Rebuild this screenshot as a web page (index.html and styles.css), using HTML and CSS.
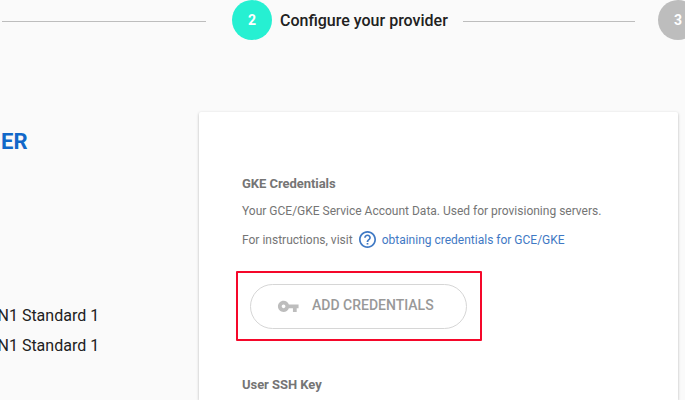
FILE: index.html
```html
<!DOCTYPE html>
<html lang="en">
<head>
<meta charset="utf-8">
<title>Configure your provider</title>
<link rel="stylesheet" href="styles.css">
</head>
<body>
<header class="stepper">
  <span class="line line-before"></span>
  <span class="step step-active">2</span>
  <span class="step-label">Configure your provider</span>
  <span class="line line-after"></span>
  <span class="step">3</span>
</header>
<main class="content">
  <aside class="summary">
    <h1>ER</h1>
    <p>N1 Standard 1</p>
    <p>N1 Standard 1</p>
  </aside>
  <section class="card">
    <h2>GKE Credentials</h2>
    <p class="description">Your GCE/GKE Service Account Data. Used for provisioning servers.</p>
    <p class="help">
      <span class="help-text">For instructions, visit</span>
      <a class="help-link">
        <svg class="help-icon" viewBox="2 2 20 20"><path fill="currentColor" d="M11 18h2v-2h-2v2zm1-16C6.480 2 2 6.480 2 12s4.480 10 10 10 10-4.480 10-10S17.520 2 12 2zm0 18c-4.410 0-8-3.590-8-8s3.590-8 8-8 8 3.590 8 8-3.590 8-8 8zm0-14c-2.210 0-4 1.790-4 4h2c0-1.100.9-2 2-2s2 .9 2 2c0 2-3 1.750-3 5h2c0-2.250 3-2.500 3-5 0-2.210-1.790-4-4-4z"/></svg>
        <span class="link-text">obtaining credentials for GCE/GKE</span>
      </a>
    </p>
    <div class="highlight">
      <button class="add-button">
        <svg class="key-icon" viewBox="0 0 24 24"><path fill="currentColor" d="M12.650 10C11.830 7.670 9.610 6 7 6c-3.310 0-6 2.690-6 6s2.690 6 6 6c2.610 0 4.830-1.670 5.650-4H17v4h4v-4h2v-4H12.650zM7 14c-1.100 0-2-.9-2-2s.9-2 2-2 2 .9 2 2-.9 2-2 2z"/></svg>
        <span class="button-text">ADD CREDENTIALS</span>
      </button>
    </div>
    <h2>User SSH Key</h2>
  </section>
</main>
</body>
</html>
```
FILE: styles.css
```css
* { box-sizing: border-box; }

body {
  margin: 0;
  width: 685px;
  height: 400px;
  overflow: hidden;
  background: #fafafa;
  color: #212121;
  font-family: Roboto, "Liberation Sans", sans-serif;
}

h1, h2, p { margin: 0; white-space: nowrap; }

.stepper {
  display: flex;
  align-items: center;
  height: 40px;
  padding-left: 2px;
}

.line { flex: none; height: 1px; margin-top: 3px; background: #bdbdbd; }
.line-before { width: 204px; margin-right: 26px; }
.line-after { width: 172px; margin-right: 23px; }

.step {
  flex: none;
  width: 40px;
  height: 40px;
  border-radius: 50%;
  background: #bdbdbd;
  color: #fff;
  font-size: 14px;
  font-weight: 700;
  line-height: 40px;
  text-align: center;
}

.step-active { background: #26f0d2; }

.step-label {
  flex: none;
  width: 191px;
  padding: 2px 0 0 8px;
  font-size: 16px;
  font-weight: 500;
  line-height: 40px;
  white-space: nowrap;
}

.content { display: flex; height: 360px; }

.summary { flex: none; width: 199px; padding-top: 87px; }

.summary h1 {
  margin: 0 0 144px 1px;
  color: #1168c9;
  font-size: 22px;
  font-weight: 700;
  line-height: 30px;
}

.summary p {
  margin-left: -2.5px;
  font-size: 16px;
  line-height: 30px;
}

.card {
  flex: none;
  width: 479px;
  height: 288px;
  margin-top: 72px;
  padding: 62px 37px 0;
  border-radius: 2px 2px 0 0;
  background: #fff;
  box-shadow: 0 1px 3px rgba(0, 0, 0, .28);
  color: #757575;
}

.card h2 {
  margin-left: 6px;
  font-size: 13px;
  font-weight: 700;
  letter-spacing: -.05px;
  line-height: 20px;
}

.description { margin: 7px 0 0 6px; font-size: 12px; line-height: 20px; }

.help {
  display: flex;
  align-items: center;
  height: 20px;
  margin: 9px 0 0 6px;
  font-size: 12px;
}

.help-link { display: flex; align-items: center; color: #3f79c4; }
.help-icon { flex: none; width: 17px; height: 17px; margin: 0 6px 2px; }

.highlight {
  width: 246px;
  height: 70px;
  margin-bottom: 34px;
  margin-top: 21px;
  padding: 11px 12px;
  border: 2px solid #f5082a;
  border-radius: 1px;
}

.add-button {
  display: flex;
  align-items: center;
  width: 217px;
  height: 45px;
  padding: 0 0 0 26px;
  border: 1px solid #d6d6d6;
  border-radius: 23px;
  background: #fff;
  color: #999;
  font: 500 14px/20px Roboto, "Liberation Sans", sans-serif;
}

.key-icon { flex: none; width: 22.5px; height: 22.5px; margin: 0 12.5px 1px 0; color: #bdbdbd; }
.button-text { padding-bottom: 4px; white-space: nowrap; }
```
